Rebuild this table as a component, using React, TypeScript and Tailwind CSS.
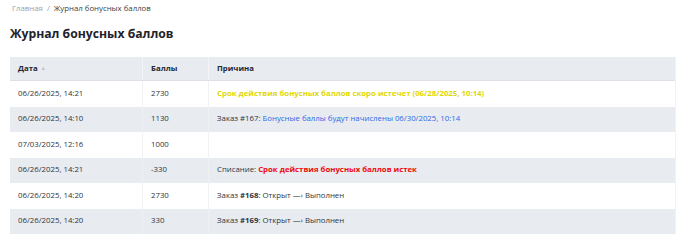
import React from "react";

type Row = { date: string; pts: string; reason: React.ReactNode };

const rows: Row[] = [
  {
    date: "06/26/2025, 14:21",
    pts: "2730",
    reason: (
      <span className="font-bold text-[#e2d800]">
        Срок действия бонусных баллов скоро истечет (06/28/2025, 10:14)
      </span>
    ),
  },
  {
    date: "06/26/2025, 14:10",
    pts: "1130",
    reason: (
      <span>
        Заказ #167: <span className="text-[#2c6ae8]">Бонусные баллы будут начислены 06/30/2025, 10:14</span>
      </span>
    ),
  },
  { date: "07/03/2025, 12:16", pts: "1000", reason: "" },
  {
    date: "06/26/2025, 14:21",
    pts: "-330",
    reason: (
      <span>
        Списание: <span className="font-bold text-[#f00a0a]">Срок действия бонусных баллов истек</span>
      </span>
    ),
  },
  {
    date: "06/26/2025, 14:20",
    pts: "2730",
    reason: (
      <span>
        Заказ <b className="font-bold">#168</b>: Открыт —› Выполнен
      </span>
    ),
  },
  {
    date: "06/26/2025, 14:20",
    pts: "330",
    reason: (
      <span>
        Заказ <b className="font-bold">#169</b>: Открыт —› Выполнен
      </span>
    ),
  },
];

export default function App() {
  return (
    <div
      className="w-[690px] h-[248px] bg-white text-[#2f353e] overflow-hidden"
      style={{ fontFamily: '"Open Sans", "Noto Sans", sans-serif' }}
    >
      <div className="pl-[12px] pt-[2px] h-[12px] text-[7.8px] leading-[12px]">
        <span className="text-[#9aa1ab]">Главная</span>
        <span className="text-[#9aa1ab] mx-[4px]">/</span>
        <span className="text-[#3a3f47]">Журнал бонусных баллов</span>
      </div>
      <h1 className="pl-[10px] mt-[14px] text-[12.2px] leading-[16px] font-bold text-[#1e232b]">
        Журнал бонусных баллов
      </h1>
      <div className="ml-[10px] mt-[15px] w-[666px] border-r border-[#f0f2f5]">
        <div className="grid grid-cols-[133px_66px_1fr] h-[24px] bg-[#e8ebf0] border-b border-[#dde1e7] text-[7.8px] font-bold text-[#222831]">
          <div className="flex items-center pl-[8px] border-r border-[#f3f4f7]">
            Дата<span className="ml-[3px] text-[5px] text-[#b8bec7]">▲</span>
          </div>
          <div className="flex items-center pl-[8px] border-r border-[#f3f4f7]">Баллы</div>
          <div className="flex items-center pl-[8px]">Причина</div>
        </div>
        {rows.map((r, i) => (
          <div
            key={i}
            className={`grid grid-cols-[133px_66px_1fr] h-[25.5px] text-[7.8px] ${
              i % 2 === 1 ? "bg-[#e8ebf0]" : "bg-white"
            }`}
          >
            <div className={`flex items-center pl-[8px] border-r ${i % 2 === 1 ? "border-[#eef0f3]" : "border-[#f0f2f5]"}`}>
              {r.date}
            </div>
            <div className={`flex items-center pl-[8px] border-r ${i % 2 === 1 ? "border-[#eef0f3]" : "border-[#f0f2f5]"}`}>
              {r.pts}
            </div>
            <div className="flex items-center pl-[8px] whitespace-nowrap">{r.reason}</div>
          </div>
        ))}
      </div>
    </div>
  );
}
